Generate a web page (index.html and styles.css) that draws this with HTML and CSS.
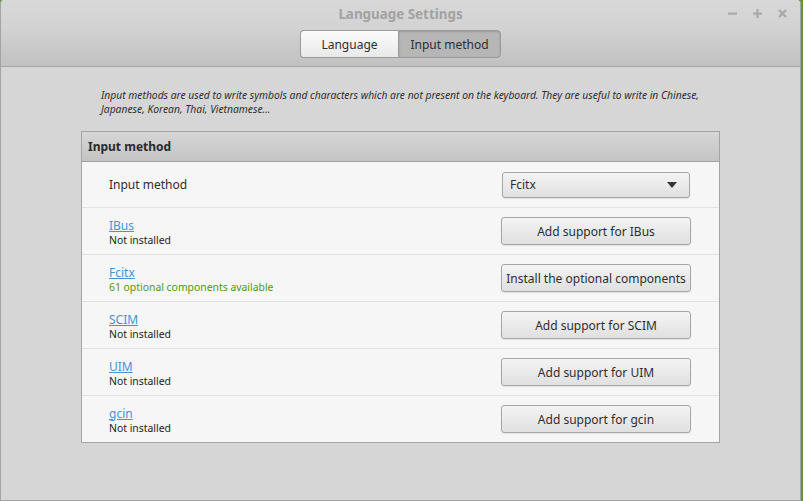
FILE: index.html
```html
<!DOCTYPE html>
<html>
<head>
<meta charset="utf-8">
<link rel="stylesheet" href="styles.css">
</head>
<body>
<div class="window">
  <div class="header">
    <div class="titlebar">
      <div class="title">Language Settings</div>
      <div class="controls">
        <svg width="9" height="9" viewBox="0 0 9 9"><rect x="0" y="3.5" width="9" height="2.2" fill="#a9a9a9"/></svg>
        <svg width="9" height="9" viewBox="0 0 9 9"><rect x="0" y="3.5" width="9" height="2.2" fill="#a9a9a9"/><rect x="3.4" y="0" width="2.2" height="9" fill="#a9a9a9"/></svg>
        <svg width="9" height="9" viewBox="0 0 9 9"><path d="M1 1L8 8M8 1L1 8" stroke="#a9a9a9" stroke-width="2.4"/></svg>
      </div>
    </div>
    <div class="tabs">
      <div class="tab">Language</div>
      <div class="tab active">Input method</div>
    </div>
  </div>
  <div class="content">
    <p class="desc">Input methods are used to write symbols and characters which are not present on the keyboard. They are useful to write in Chinese, Japanese, Korean, Thai, Vietnamese...</p>
    <div class="panel">
      <div class="panel-head">Input method</div>
      <div class="row first">
        <div class="label">Input method</div>
        <div class="combo"><span>Fcitx</span><svg width="10" height="6" viewBox="0 0 10 6"><path d="M0 0H10L5 6Z" fill="#333"/></svg></div>
      </div>
      <div class="row">
        <div class="info"><a class="link">IBus</a><div class="status">Not installed</div></div>
        <div class="btn">Add support for IBus</div>
      </div>
      <div class="row">
        <div class="info"><a class="link">Fcitx</a><div class="status ok">61 optional components available</div></div>
        <div class="btn">Install the optional components</div>
      </div>
      <div class="row">
        <div class="info"><a class="link">SCIM</a><div class="status">Not installed</div></div>
        <div class="btn">Add support for SCIM</div>
      </div>
      <div class="row">
        <div class="info"><a class="link">UIM</a><div class="status">Not installed</div></div>
        <div class="btn">Add support for UIM</div>
      </div>
      <div class="row last">
        <div class="info"><a class="link">gcin</a><div class="status">Not installed</div></div>
        <div class="btn">Add support for gcin</div>
      </div>
    </div>
  </div>
</div>
</body>
</html>
```

FILE: styles.css
```css
html, body {
  margin: 0;
  padding: 0;
}
body {
  background: #66962c;
  width: 803px;
  height: 501px;
  overflow: hidden;
  font-family: "Noto Sans", "DejaVu Sans", sans-serif;
  color: #2e2e2e;
}
.window {
  width: 799px;
  height: 500px;
  border: 1px solid #a4a4a4;
  border-top: none;
  border-radius: 4px 4px 0 0;
  background: #d6d6d6;
  display: flex;
  flex-direction: column;
  overflow: hidden;
}
.header {
  height: 66px;
  background: linear-gradient(#d8d8d8, #d3d3d3 40%, #c1c1c1);
  border-bottom: 1px solid #a6a6a6;
  display: flex;
  flex-direction: column;
}
.titlebar {
  height: 29px;
  display: flex;
  align-items: center;
  justify-content: center;
  position: relative;
}
.title {
  font-size: 13.4px;
  font-weight: bold;
  color: #a2a2a2;
  margin-top: -2px;
}
.controls {
  position: absolute;
  right: 13px;
  top: 9px;
  display: flex;
  gap: 16px;
}
.tabs {
  display: flex;
  justify-content: center;
  margin-top: 1px;
}
.tab {
  height: 26px;
  border: 1px solid #9a9a9a;
  font-size: 12px;
  line-height: 27px;
  color: #2e2e2e;
  text-align: center;
  background: linear-gradient(#fbfbfb, #e9e9e9);
}
.tab:first-child {
  width: 97px;
  border-radius: 4px 0 0 4px;
  border-right: none;
}
.tab.active {
  width: 101px;
  border-radius: 0 4px 4px 0;
  background: #b6b6b6;
  box-shadow: inset 0 1px 2px rgba(0,0,0,0.15);
}
.content {
  flex: 1;
  padding: 21px 0 0 80px;
}
.desc {
  margin: 0 0 0 20px;
  width: 612px;
  font-size: 10.3px;
  font-style: italic;
  line-height: 14px;
  color: #2e2e2e;
}
.panel {
  margin-top: 15px;
  width: 637px;
  border: 1px solid #a3a3a3;
  background: #f6f6f6;
}
.panel-head {
  height: 29px;
  line-height: 29px;
  padding-left: 6px;
  font-size: 12px;
  font-weight: bold;
  color: #2a2a2a;
  background: linear-gradient(#d6d6d6, #c4c4c4);
  border-bottom: 1px solid #a3a3a3;
}
.row {
  height: 46px;
  border-bottom: 1px solid #e2e2e2;
  display: flex;
  align-items: center;
  justify-content: space-between;
  padding: 0 28px 0 27px;
}
.row.first {
  height: 45px;
}
.row.last {
  border-bottom: none;
}
.label {
  font-size: 12px;
}
.info {
  display: flex;
  flex-direction: column;
  margin-top: 3px;
}
.link {
  font-size: 12px;
  line-height: 15px;
  color: #4a90d9;
  text-decoration: underline;
}
.status {
  font-size: 10.4px;
  line-height: 15px;
  color: #222;
}
.status.ok {
  color: #4e9a06;
}
.btn, .combo {
  width: 188px;
  height: 26px;
  border: 1px solid #a6a6a6;
  border-radius: 3px;
  background: linear-gradient(#f4f4f4, #e0e0e0);
  box-shadow: 0 1px 1px rgba(0,0,0,0.08);
  font-size: 12px;
  white-space: nowrap;
  color: #2e2e2e;
  display: flex;
  align-items: center;
  justify-content: center;
}
.combo {
  justify-content: space-between;
  padding: 0 12px 0 7px;
  box-sizing: border-box;
  width: 188px;
  height: 26px;
  margin-right: 1px;
}
```
